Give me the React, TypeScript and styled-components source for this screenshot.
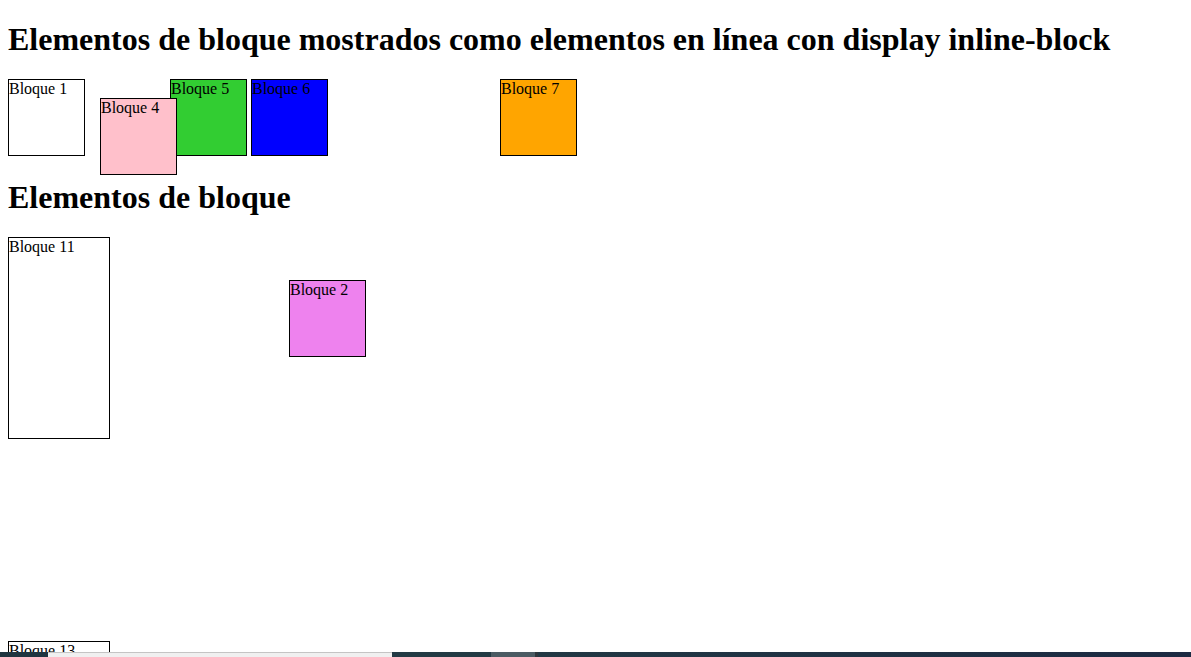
import React from "react";
import styled, { createGlobalStyle } from "styled-components";

const Global = createGlobalStyle`
  html { overflow: hidden; }
  body {
    margin: 0 8px 8px;
    font-family: "Liberation Serif", "Times New Roman", serif;
    font-size: 16px;
    color: #000;
    background: #fff;
  }
`;

const Title = styled.h1`
  font-size: 32px;
  font-weight: bold;
  margin: 21.44px 0;
  line-height: 36px;
  white-space: nowrap;
`;

const InlineRow = styled.div`
  display: flex;
  align-items: flex-start;
  gap: 4px;
  padding-bottom: 2px;
`;

const Box = styled.div<{ $bg?: string; $w?: number; $h?: number }>`
  box-sizing: content-box;
  width: ${(p) => p.$w ?? 75}px;
  height: ${(p) => p.$h ?? 75}px;
  border: 1px solid #000;
  background: ${(p) => p.$bg ?? "transparent"};
  line-height: 18px;
  flex: none;
`;

const ShiftedBox = styled(Box)`
  position: relative;
  left: 11px;
  top: 19px;
`;

const FarBox = styled(Box)`
  margin-left: 168px;
`;

const BlockSection = styled.div`
  display: flex;
  flex-direction: column;
  align-items: flex-start;
`;

const BlockRow = styled.div`
  display: flex;
  align-items: flex-start;
`;

const DetachedBox = styled(Box)`
  margin-left: 179px;
  margin-top: 43px;
`;

const HiddenBox = styled(Box)`
  visibility: hidden;
`;

const Taskbar = styled.div`
  position: fixed;
  left: 0;
  right: 0;
  bottom: 0;
  height: 5px;
  display: flex;
  z-index: 10;
`;

const Segment = styled.div<{ $w?: number; $bg: string; $top?: string }>`
  ${(p) => (p.$w ? `width: ${p.$w}px; flex: none;` : "flex: 1;")}
  background: ${(p) => p.$bg};
  ${(p) => (p.$top ? `border-top: 1px solid ${p.$top}; box-sizing: border-box;` : "")}
`;

export default function App() {
  return (
    <>
      <Global />
      <Title>Elementos de bloque mostrados como elementos en línea con display inline-block</Title>
      <InlineRow>
        <Box>Bloque 1</Box>
        <ShiftedBox $bg="pink">Bloque 4</ShiftedBox>
        <Box $bg="limegreen">Bloque 5</Box>
        <Box $bg="blue">Bloque 6</Box>
        <FarBox $bg="orange">Bloque 7</FarBox>
      </InlineRow>
      <Title>Elementos de bloque</Title>
      <BlockSection>
        <BlockRow>
          <Box $w={100} $h={200}>Bloque 11</Box>
          <DetachedBox $bg="violet">Bloque 2</DetachedBox>
        </BlockRow>
        <HiddenBox $w={100} $h={200}>Bloque 12</HiddenBox>
        <Box $w={100} $h={200}>Bloque 13</Box>
      </BlockSection>
      <Taskbar>
        <Segment $w={48} $bg="#1f3540" />
        <Segment $w={344} $bg="#f0f0f0" $top="#c4c4c4" />
        <Segment $w={99} $bg="#223a44" />
        <Segment $w={44} $bg="#4b5b63" />
        <Segment $w={3} $bg="#2e363c" />
        <Segment $bg="linear-gradient(90deg, #223844, #1c2a42)" />
      </Taskbar>
    </>
  );
}
